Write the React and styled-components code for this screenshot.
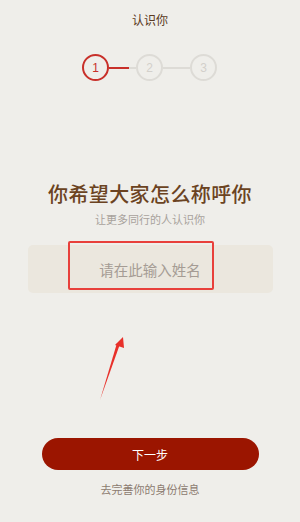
import React from "react";
import styled, { createGlobalStyle } from "styled-components";

const GlobalStyle = createGlobalStyle`
  html, body {
    margin: 0;
    padding: 0;
    background: #efeeea;
  }
  body {
    font-family: "Noto Sans CJK SC", "Noto Sans", sans-serif;
  }
`;

const Page = styled.div`
  position: relative;
  width: 300px;
  height: 522px;
  background: #efeeea;
  display: flex;
  flex-direction: column;
  align-items: center;
  overflow: hidden;
`;

const Title = styled.div`
  margin-top: 10px;
  height: 20px;
  line-height: 20px;
  font-size: 12px;
  color: #5a3a22;
`;

const Steps = styled.div`
  margin-top: 24px;
  margin-left: -1px;
  display: flex;
  align-items: center;
`;

const Circle = styled.div`
  width: 23px;
  height: 23px;
  border-radius: 50%;
  border: 2px solid ${(p) => (p.$active ? "#c8302a" : "#dddbd6")};
  color: ${(p) => (p.$active ? "#c8302a" : "#d3d0cb")};
  font-size: 12px;
  font-family: "Liberation Sans", Arial, sans-serif;
  display: flex;
  align-items: center;
  justify-content: center;
`;

const Line = styled.div`
  width: 27px;
  height: 2px;
  background: ${(p) =>
    p.$active
      ? "linear-gradient(to right, #c8302a 0, #c8302a 20px, #dddbd6 20px)"
      : "#dddbd6"};
`;

const Heading = styled.h1`
  margin: 99px 0 0;
  font-size: 20px;
  line-height: 28px;
  font-weight: 500;
  color: #6b4322;
  letter-spacing: 0.4px;
`;

const Sub = styled.div`
  margin-top: 4px;
  font-size: 11px;
  line-height: 14px;
  color: #a8a29c;
`;

const InputWrap = styled.div`
  position: relative;
  margin-top: 19px;
  width: 245px;
  height: 48px;
  border-radius: 5px;
  background: #ebe7de;
  display: flex;
  align-items: center;
  justify-content: center;
`;

const NameInput = styled.input`
  width: 100%;
  height: 100%;
  border: none;
  background: transparent;
  outline: none;
  text-align: center;
  font-family: "Noto Sans CJK SC", sans-serif;
  font-size: 14.5px;
  color: #5a3a22;
  &::placeholder {
    color: #a59c94;
  }
`;

const Highlight = styled.div`
  position: absolute;
  left: 40px;
  top: -4px;
  width: 142px;
  height: 45px;
  border: 2px solid #e8403b;
  border-radius: 2px;
  pointer-events: none;
`;

const Arrow = styled.svg`
  position: absolute;
  left: 94px;
  top: 332px;
`;

const Spacer = styled.div`
  flex: 1;
`;

const NextButton = styled.button`
  width: 217px;
  height: 32px;
  border: none;
  border-radius: 16px;
  background: #9b1500;
  color: #fff;
  font-family: "Noto Sans CJK SC", sans-serif;
  font-size: 12px;
  cursor: pointer;
`;

const Link = styled.div`
  margin-top: 11px;
  margin-bottom: 25px;
  font-size: 11px;
  line-height: 16px;
  color: #8c7b70;
`;

export default function App() {
  return (
    <>
      <GlobalStyle />
      <Page>
        <Title>认识你</Title>
        <Steps>
          <Circle $active>1</Circle>
          <Line $active />
          <Circle>2</Circle>
          <Line />
          <Circle>3</Circle>
        </Steps>
        <Heading>你希望大家怎么称呼你</Heading>
        <Sub>让更多同行的人认识你</Sub>
        <InputWrap>
          <NameInput placeholder="请在此输入姓名" />
          <Highlight />
        </InputWrap>
        <Arrow width="34" height="72" viewBox="0 0 34 72">
          <path d="M6 68 L26 12 L23 11 Z" fill="#e8302a" />
          <path d="M21 13 L29 5 L30 16 Z" fill="#e8302a" />
        </Arrow>
        <Spacer />
        <NextButton>下一步</NextButton>
        <Link>去完善你的身份信息</Link>
      </Page>
    </>
  );
}
